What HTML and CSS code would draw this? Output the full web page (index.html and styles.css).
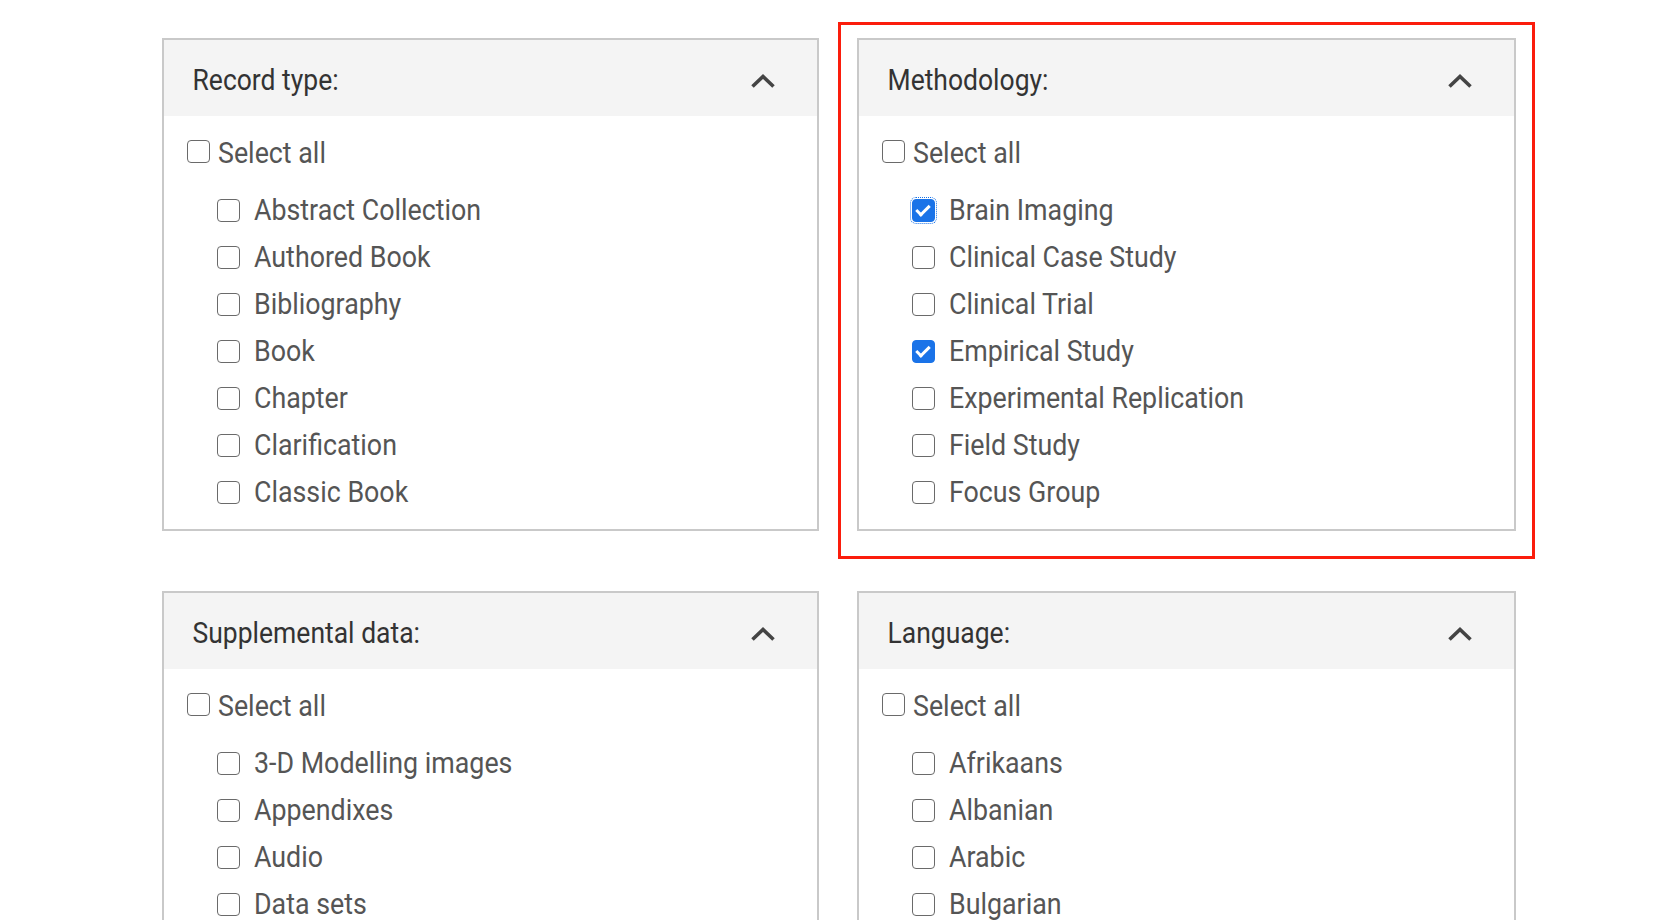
FILE: index.html
```html
<!DOCTYPE html>
<html lang="en">
<head>
<meta charset="utf-8">
<title>Filters</title>
<link rel="stylesheet" href="styles.css">
</head>
<body>
<div class="page">
  <div class="grid">
    <section class="card">
      <div class="card-head">
        <span class="card-title">Record type:</span>
        <svg class="chev" width="26" height="16" viewBox="0 0 26 16"><polyline points="2.5,13.5 13,3.5 23.5,13.5" /></svg>
      </div>
      <div class="card-body">
        <label class="row all"><input type="checkbox" class="cb"><span class="txt">Select all</span></label>
        <ul class="items">
          <li><label class="row"><input type="checkbox" class="cb"><span class="txt">Abstract Collection</span></label></li>
          <li><label class="row"><input type="checkbox" class="cb"><span class="txt">Authored Book</span></label></li>
          <li><label class="row"><input type="checkbox" class="cb"><span class="txt">Bibliography</span></label></li>
          <li><label class="row"><input type="checkbox" class="cb"><span class="txt">Book</span></label></li>
          <li><label class="row"><input type="checkbox" class="cb"><span class="txt">Chapter</span></label></li>
          <li><label class="row"><input type="checkbox" class="cb"><span class="txt">Clarification</span></label></li>
          <li><label class="row"><input type="checkbox" class="cb"><span class="txt">Classic Book</span></label></li>
        </ul>
      </div>
    </section>

    <section class="card highlighted">
      <div class="card-head">
        <span class="card-title">Methodology:</span>
        <svg class="chev" width="26" height="16" viewBox="0 0 26 16"><polyline points="2.5,13.5 13,3.5 23.5,13.5" /></svg>
      </div>
      <div class="card-body">
        <label class="row all"><input type="checkbox" class="cb"><span class="txt">Select all</span></label>
        <ul class="items">
          <li><label class="row"><input type="checkbox" class="cb focused" checked><span class="txt">Brain Imaging</span></label></li>
          <li><label class="row"><input type="checkbox" class="cb"><span class="txt">Clinical Case Study</span></label></li>
          <li><label class="row"><input type="checkbox" class="cb"><span class="txt">Clinical Trial</span></label></li>
          <li><label class="row"><input type="checkbox" class="cb" checked><span class="txt">Empirical Study</span></label></li>
          <li><label class="row"><input type="checkbox" class="cb"><span class="txt">Experimental Replication</span></label></li>
          <li><label class="row"><input type="checkbox" class="cb"><span class="txt">Field Study</span></label></li>
          <li><label class="row"><input type="checkbox" class="cb"><span class="txt">Focus Group</span></label></li>
        </ul>
      </div>
    </section>

    <section class="card">
      <div class="card-head">
        <span class="card-title">Supplemental data:</span>
        <svg class="chev" width="26" height="16" viewBox="0 0 26 16"><polyline points="2.5,13.5 13,3.5 23.5,13.5" /></svg>
      </div>
      <div class="card-body">
        <label class="row all"><input type="checkbox" class="cb"><span class="txt">Select all</span></label>
        <ul class="items">
          <li><label class="row"><input type="checkbox" class="cb"><span class="txt">3-D Modelling images</span></label></li>
          <li><label class="row"><input type="checkbox" class="cb"><span class="txt">Appendixes</span></label></li>
          <li><label class="row"><input type="checkbox" class="cb"><span class="txt">Audio</span></label></li>
          <li><label class="row"><input type="checkbox" class="cb"><span class="txt">Data sets</span></label></li>
        </ul>
      </div>
    </section>

    <section class="card">
      <div class="card-head">
        <span class="card-title">Language:</span>
        <svg class="chev" width="26" height="16" viewBox="0 0 26 16"><polyline points="2.5,13.5 13,3.5 23.5,13.5" /></svg>
      </div>
      <div class="card-body">
        <label class="row all"><input type="checkbox" class="cb"><span class="txt">Select all</span></label>
        <ul class="items">
          <li><label class="row"><input type="checkbox" class="cb"><span class="txt">Afrikaans</span></label></li>
          <li><label class="row"><input type="checkbox" class="cb"><span class="txt">Albanian</span></label></li>
          <li><label class="row"><input type="checkbox" class="cb"><span class="txt">Arabic</span></label></li>
          <li><label class="row"><input type="checkbox" class="cb"><span class="txt">Bulgarian</span></label></li>
        </ul>
      </div>
    </section>
  </div>
</div>
</body>
</html>
```

FILE: styles.css
```css
html, body {
  margin: 0;
  padding: 0;
  background: #ffffff;
  overflow: hidden;
  height: 100%;
}

body {
  font-family: Roboto, "Liberation Sans", Arial, sans-serif;
  color: #555555;
}

.page {
  padding: 37.5px 0 0 162px;
}

.grid {
  display: grid;
  grid-template-columns: 657px 659px;
  column-gap: 38px;
  row-gap: 60px;
  align-items: start;
}

.card {
  border: 2px solid #c9c9c9;
  background: #ffffff;
  position: relative;
}

.highlighted::after {
  content: "";
  position: absolute;
  top: -18px;
  left: -21.5px;
  right: -21px;
  bottom: -30px;
  border: 3px solid #fb1d0c;
  pointer-events: none;
}

.card-head {
  height: 76px;
  box-sizing: border-box;
  padding: 3px 41px 0 28.5px;
  background: #f4f4f4;
  display: flex;
  align-items: center;
  justify-content: space-between;
}

.card-title {
  display: inline-block;
  font-size: 26.5px;
  color: #333333;
  transform: scaleY(1.1);
}

.chev {
  display: block;
  width: 26px;
  height: 16px;
  position: relative;
  top: 1.5px;
}

.chev polyline {
  fill: none;
  stroke: #444444;
  stroke-width: 3.6;
  stroke-linecap: butt;
  stroke-linejoin: miter;
}

.card-body {
  padding: 14px 0 13px 22.5px;
}

.row {
  display: flex;
  align-items: center;
  height: 47px;
  font-size: 26.8px;
  color: #555555;
  cursor: pointer;
}

.txt {
  display: inline-block;
  transform: scaleY(1.1);
}

.row.all {
  gap: 8.5px;
}

.row.all .cb {
  position: relative;
  top: -2px;
}

.items {
  list-style: none;
  margin: 10px 0 0 0;
  padding: 0 0 0 30px;
}

.items .row {
  gap: 14.5px;
}

.cb {
  -webkit-appearance: none;
  appearance: none;
  margin: 0;
  flex: none;
  width: 23px;
  height: 23px;
  box-sizing: border-box;
  border: 1.6px solid #6a6a6a;
  border-radius: 4px;
  background: #ffffff;
  position: relative;
  cursor: pointer;
}

.cb:checked {
  background: #1a73e8;
  border-color: #1a73e8;
}

.cb:checked::before {
  content: "";
  position: absolute;
  left: 6.5px;
  top: 2px;
  width: 5px;
  height: 11px;
  border-right: 3px solid #ffffff;
  border-bottom: 3px solid #ffffff;
  transform: rotate(45deg);
}

.cb.focused {
  outline: 1.5px dotted #1a73e8;
  outline-offset: 1px;
}
```
